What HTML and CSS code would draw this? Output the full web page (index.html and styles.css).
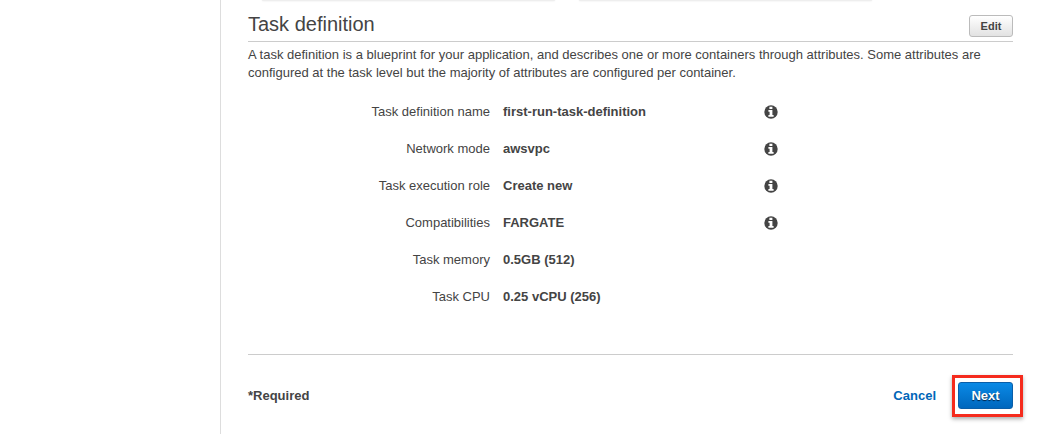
FILE: index.html
```html
<!DOCTYPE html>
<html lang="en">
<head>
<meta charset="utf-8">
<meta name="viewport" content="width=device-width, initial-scale=1">
<title>Task definition</title>
<link rel="stylesheet" href="styles.css">
</head>
<body>
<svg class="symbols" aria-hidden="true">
  <symbol id="info" viewBox="0 0 14 14">
    <circle cx="7" cy="7" r="6.7" fill="#444"/>
    <path fill="#fff" d="M5.4 1.8h3v2.3h-3zM4.4 5h4v4.9h1.2v1.9H4.4V9.9h1.2V6.8H4.4z"/>
  </symbol>
</svg>
<div class="layout">
  <aside class="sidebar"></aside>
  <main class="content">
    <div class="cards"><div class="card"></div><div class="card"></div></div>
    <header class="section-header">
      <h2 class="title">Task definition</h2>
      <button class="button edit" type="button">Edit</button>
    </header>
    <p class="description">A task definition is a blueprint for your application, and describes one or more containers through attributes. Some attributes are configured at the task level but the majority of attributes are configured per container.</p>
    <dl class="details">
      <div class="row"><dt>Task definition name</dt><dd>first-run-task-definition</dd><dd><svg class="info" role="img" aria-label="Info"><use href="#info"/></svg></dd></div>
      <div class="row"><dt>Network mode</dt><dd>awsvpc</dd><dd><svg class="info" role="img" aria-label="Info"><use href="#info"/></svg></dd></div>
      <div class="row"><dt>Task execution role</dt><dd>Create new</dd><dd><svg class="info" role="img" aria-label="Info"><use href="#info"/></svg></dd></div>
      <div class="row"><dt>Compatibilities</dt><dd>FARGATE</dd><dd><svg class="info" role="img" aria-label="Info"><use href="#info"/></svg></dd></div>
      <div class="row"><dt>Task memory</dt><dd>0.5GB (512)</dd></div>
      <div class="row"><dt>Task CPU</dt><dd>0.25 vCPU (256)</dd></div>
    </dl>
    <footer class="actions">
      <span class="required">*Required</span>
      <a class="cancel" href="#">Cancel</a>
      <div class="highlight"><button class="button next" type="button">Next</button></div>
    </footer>
  </main>
</div>
</body>
</html>
```
FILE: styles.css
```css
* {
  box-sizing: border-box;
}

body {
  margin: 0;
  background: #fff;
  color: #444;
  font: 13px/18px "Helvetica Neue", Helvetica, "Liberation Sans", Arial, sans-serif;
}

.symbols {
  display: none;
}

.layout {
  display: flex;
  min-height: 100vh;
}

.sidebar {
  flex: 0 0 220px;
}

.content {
  flex: 1;
  min-width: 0;
  padding: 0 50px 16px 27px;
  border-left: 1px solid #ddd;
}

.cards {
  display: flex;
  gap: 24px;
  padding-left: 14px;
}

.card {
  width: 293px;
  height: 1px;
  border-radius: 0 0 3px 3px;
  background: #eee;
  box-shadow: 0 0 2px #ddd;
}

.section-header {
  display: flex;
  justify-content: space-between;
  align-items: flex-end;
  height: 41px;
  padding-bottom: 4px;
  border-bottom: 1px solid #ccc;
}

.title {
  margin: 0;
  padding-bottom: 1px;
  font-size: 20px;
  line-height: 24px;
  font-weight: 400;
}

.button {
  border-radius: 3px;
  font-family: inherit;
  font-weight: 700;
  cursor: pointer;
}

.edit {
  width: 44px;
  height: 22px;
  padding: 0;
  border: 1px solid #bbb;
  background: linear-gradient(#fff, #e2e2e2);
  color: #444;
  font-size: 11px;
}

.description {
  margin: 4px 0 11px;
}

.details {
  margin: 0 0 39px;
}

.row {
  display: grid;
  grid-template-columns: 242fr 248fr 249fr;
  column-gap: 13px;
  align-items: center;
  height: 37px;
}

.row dt {
  text-align: right;
}

.row dd {
  margin: 0;
  font-weight: 700;
}

.info {
  display: block;
  width: 14px;
  height: 14px;
}

.actions {
  display: flex;
  align-items: center;
  padding-top: 20px;
  border-top: 1px solid #ccc;
}

.required {
  margin-right: auto;
  font-weight: 700;
}

.cancel {
  margin-right: 16px;
  color: #0066b8;
  font-weight: 700;
  text-decoration: none;
}

.highlight {
  margin-right: -10px;
  padding: 4px 7px 5px 3px;
  border: 3px solid #f52b1d;
  box-shadow: 0 2px 4px #aaa;
}

.next {
  display: block;
  width: 55px;
  height: 27px;
  padding: 0;
  border: 1px solid #0a5ea8;
  background: linear-gradient(#0a8ae6, #0067bd);
  color: #fff;
  font-size: 13px;
  text-shadow: 0 1px 1px #024;
}
```
